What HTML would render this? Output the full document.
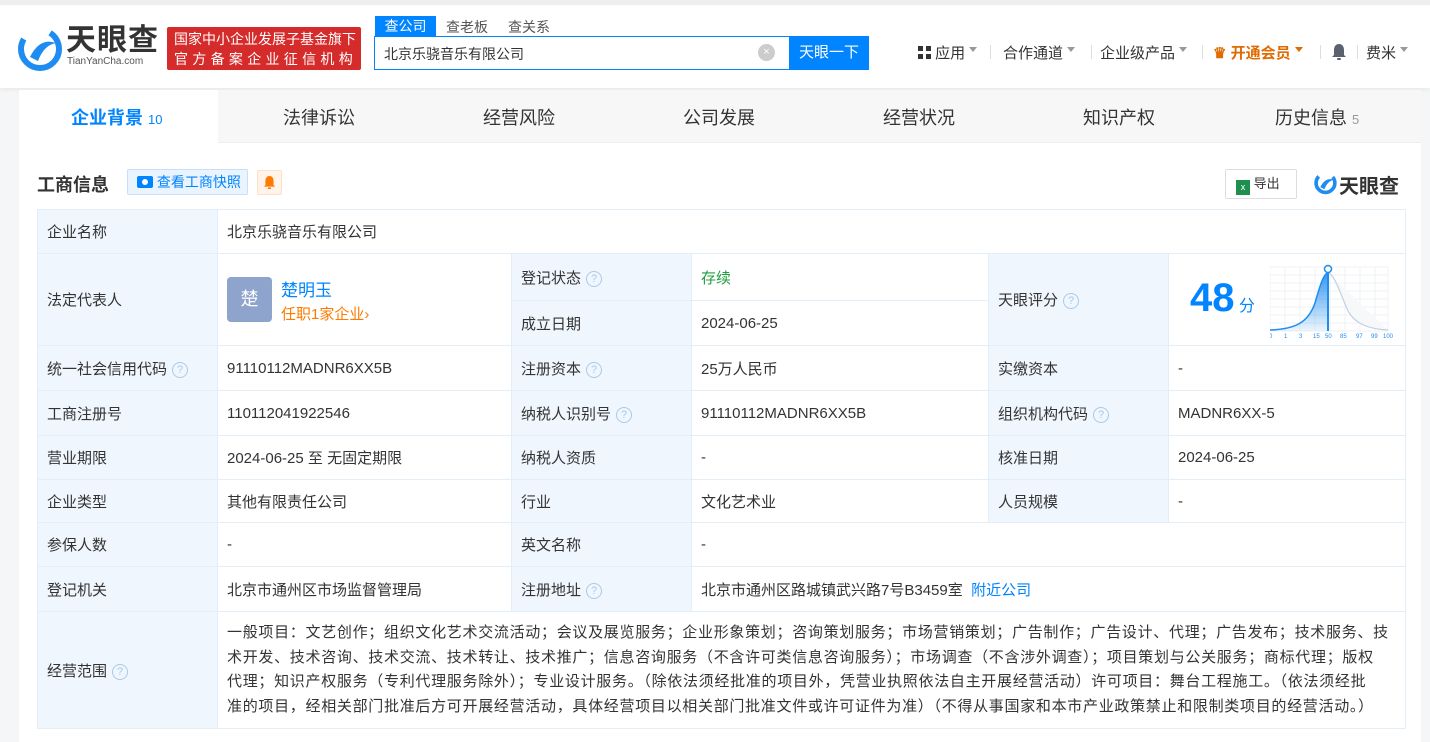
<!DOCTYPE html>
<html><head><meta charset="utf-8"><style>
*{margin:0;padding:0;box-sizing:border-box}
body{width:1430px;height:742px;overflow:hidden;background:#f5f6f7;font-family:"Liberation Sans","Noto Sans CJK SC",sans-serif;color:#333;font-size:15px;position:relative}
.a{position:absolute}
.hdr{left:0;top:0;width:1430px;height:88px;background:#fff;border-top:5px solid #eee;box-shadow:0 2px 4px rgba(0,0,0,.05)}
.nav{top:42px;font-size:15px;color:#333;white-space:nowrap}
.tri{display:inline-block;border:4px solid transparent;border-top:5px solid #999;vertical-align:2px;margin-left:4px}
.sep{top:45px;width:1px;height:14px;background:#ddd}
.card{left:19px;top:90px;width:1402px;height:652px;background:#fff}
.tabs{left:19px;top:90px;width:1402px;height:53px;background:#f7f7f7;border-bottom:1px solid #eee}
.tab{top:104px;font-size:18px;color:#333}
table{position:absolute;left:37px;top:209px;border-collapse:collapse;table-layout:fixed;width:1368px}
td{border:1px solid #e4eef6;padding:0 9px;font-size:15px;color:#333;vertical-align:middle}
td.l{background:#eff6fd}
.q{display:inline-block;width:16px;height:16px;border:1px solid #a9c9ea;border-radius:50%;color:#a9c9ea;font-size:11px;line-height:14px;text-align:center;margin-left:5px;vertical-align:1px}
.blue{color:#0084ff}
</style></head><body>
<div class="a hdr"></div>
<svg class="a" style="left:18px;top:27px" width="46" height="44" viewBox="0 0 46 44">
<circle cx="22" cy="22" r="19" fill="none" stroke="#1e8cf0" stroke-width="6" stroke-dasharray="70 30"/>
<path d="M12 30 Q22 10 38 16 Q26 18 20 34Z" fill="#1e8cf0"/></svg>
<div class="a" style="left:66px;top:26px;font-size:30px;line-height:30px;font-weight:bold;color:#333;letter-spacing:1px">天眼查</div>
<div class="a" style="left:67px;top:56px;font-size:10px;line-height:11px;color:#555">TianYanCha.com</div>
<div class="a" style="left:167px;top:27px;width:194px;height:43px;background:#d62b2b;border-radius:2px;color:#fff;font-size:14px;line-height:20px;padding:2px 0 0 7px;white-space:nowrap">国家中小企业发展子基金旗下<br><span style="letter-spacing:4.3px">官方备案企业征信机构</span></div>
<div class="a" style="left:375px;top:16px;width:61px;height:21px;background:#0084ff;color:#fff;font-size:14px;text-align:center;line-height:20px">查公司</div>
<div class="a" style="left:446px;top:17px;font-size:14px;color:#555">查老板</div>
<div class="a" style="left:508px;top:17px;font-size:14px;color:#555">查关系</div>
<div class="a" style="left:374px;top:36px;width:495px;height:34px;border:1px solid #0084ff;background:#fff"></div>
<div class="a" style="left:384px;top:44px;font-size:14px;color:#333">北京乐骁音乐有限公司</div>
<div class="a" style="left:758px;top:44px;width:17px;height:17px;border-radius:50%;background:#ccc;color:#fff;font-size:11px;text-align:center;line-height:17px">×</div>
<div class="a" style="left:789px;top:36px;width:80px;height:34px;background:#0084ff;color:#fff;font-size:15px;text-align:center;line-height:34px">天眼一下</div>
<div class="a nav" style="left:918px"><span style="display:inline-block;width:13px;height:13px;background:linear-gradient(#333,#333) 0 0/5px 5px no-repeat,linear-gradient(#333,#333) 8px 0/5px 5px no-repeat,linear-gradient(#333,#333) 0 8px/5px 5px no-repeat,linear-gradient(#333,#333) 8px 8px/5px 5px no-repeat;vertical-align:-1px"></span> 应用<span class="tri"></span></div>
<div class="a sep" style="left:990px"></div>
<div class="a nav" style="left:1003px">合作通道<span class="tri"></span></div>
<div class="a sep" style="left:1091px"></div>
<div class="a nav" style="left:1100px">企业级产品<span class="tri"></span></div>
<div class="a sep" style="left:1202px"></div>
<div class="a nav" style="left:1213px;color:#e06b00;font-weight:bold">♛ 开通会员<span class="tri" style="border-top-color:#e06b00"></span></div>
<div class="a sep" style="left:1320px"></div>
<svg class="a" style="left:1331px;top:43px" width="16" height="18" viewBox="0 0 16 18"><path d="M8 1C4.5 1 3 4 3 7V12L1 14H15L13 12V7C13 4 11.5 1 8 1Z" fill="#5a6270"/><rect x="6" y="15" width="4" height="2" rx="1" fill="#5a6270"/></svg>
<div class="a sep" style="left:1357px"></div>
<div class="a nav" style="left:1366px">费米<span class="tri"></span></div>

<div class="a card"></div>
<div class="a tabs"></div>
<div class="a" style="left:19px;top:90px;width:199px;height:54px;background:#fff"></div>
<div class="a tab" style="left:71px;color:#0084ff;font-weight:bold">企业背景 <span style="font-size:13px;font-weight:normal">10</span></div>
<div class="a tab" style="left:283px">法律诉讼</div>
<div class="a tab" style="left:483px">经营风险</div>
<div class="a tab" style="left:683px">公司发展</div>
<div class="a tab" style="left:883px">经营状况</div>
<div class="a tab" style="left:1083px">知识产权</div>
<div class="a tab" style="left:1275px">历史信息 <span style="font-size:13px;color:#999">5</span></div>

<div class="a" style="left:37px;top:171px;font-size:18px;font-weight:bold;color:#333">工商信息</div>
<div class="a" style="left:127px;top:169px;width:121px;height:26px;background:#eaf4fe;border:1px solid #c6e0fb;border-radius:2px;color:#0084ff;font-size:14px;line-height:24px;padding-left:9px"><span style="display:inline-block;width:16px;height:12px;background:#0084ff;border-radius:2px;vertical-align:-1px;position:relative"><span style="position:absolute;left:5px;top:3px;width:6px;height:6px;border-radius:50%;background:#fff"></span></span> 查看工商快照</div>
<div class="a" style="left:257px;top:170px;width:25px;height:25px;background:#fff3ea;border:1px solid #fde0c8;border-radius:2px"><svg style="position:absolute;left:5px;top:4px" width="13" height="15" viewBox="0 0 16 18"><path d="M8 1C4.5 1 3 4 3 7V12L1 14H15L13 12V7C13 4 11.5 1 8 1Z" fill="#ff7a00"/><rect x="6" y="15" width="4" height="2" rx="1" fill="#ff7a00"/></svg></div>
<div class="a" style="left:1225px;top:169px;width:72px;height:30px;border:1px solid #ddd;border-radius:2px;font-size:13px;line-height:28px;padding-left:10px;color:#333"><span style="display:inline-block;width:14px;height:15px;background:#1e8f4e;color:#fff;font-size:9px;line-height:15px;text-align:center;vertical-align:-2px">x</span> 导出</div>
<svg class="a" style="left:1314px;top:171px" width="24" height="24" viewBox="0 0 46 44"><circle cx="22" cy="22" r="18" fill="none" stroke="#1e8cf0" stroke-width="7" stroke-dasharray="70 30"/><path d="M12 30 Q22 10 38 16 Q26 18 20 34Z" fill="#1e8cf0"/></svg>
<div class="a" style="left:1339px;top:170px;font-size:20px;font-weight:bold;color:#333">天眼查</div>

<table>
<colgroup><col style="width:180px"><col style="width:294px"><col style="width:180px"><col style="width:297px"><col style="width:180px"><col style="width:237px"></colgroup>
<tr style="height:44px"><td class="l">企业名称</td><td colspan="5">北京乐骁音乐有限公司</td></tr>
<tr style="height:47px"><td class="l" rowspan="2">法定代表人</td><td rowspan="2" style="position:relative"><div style="position:absolute;left:9px;top:23px;width:45px;height:45px;background:#8ea4cc;border-radius:4px;color:#fff;font-size:18px;text-align:center;line-height:45px">楚</div><div style="position:absolute;left:63px;top:22px;font-size:17px;color:#0084ff">楚明玉</div><div style="position:absolute;left:63px;top:49px;font-size:15px;color:#ff7a00">任职1家企业›</div></td><td class="l">登记状态<span class="q">?</span></td><td style="color:#1f9d3d">存续</td><td class="l" rowspan="2">天眼评分<span class="q">?</span></td><td rowspan="2" style="position:relative"><div style="position:absolute;left:21px;top:22px;font-size:40px;font-weight:bold;color:#0084ff">48<span style="font-size:16px;font-weight:normal"> 分</span></div>
<svg style="position:absolute;left:101px;top:9px" width="124" height="76" viewBox="0 0 124 76"><g stroke="#eef2f6" stroke-width="1"><path d="M0 4H118M0 12H118M0 20H118M0 28H118M0 36H118M0 44H118M0 52H118M0 60H118M0 68H118M0 4V68M15 4V68M30 4V68M45 4V68M60 4V68M75 4V68M90 4V68M105 4V68M118 4V68"/></g>
<defs><linearGradient id="g" x1="0" y1="0" x2="0" y2="1"><stop offset="0" stop-color="#1e8cf0" stop-opacity=".9"/><stop offset="1" stop-color="#1e8cf0" stop-opacity=".08"/></linearGradient></defs>
<path d="M0 67 C25 66 38 60 45 40 C50 22 54 10 58 10 L58 68 L0 68Z" fill="url(#g)"/>
<path d="M58 10 C64 10 70 30 78 48 C86 62 100 66 118 67" fill="#f7f8fa" stroke="#bfd0e2" stroke-width="1.2"/>
<path d="M0 67 C25 66 38 60 45 40 C50 22 54 10 58 10" fill="none" stroke="#1e8cf0" stroke-width="1.5"/>
<path d="M58 8V68" stroke="#1e8cf0" stroke-width="2"/><circle cx="58" cy="6" r="3.5" fill="#fff" stroke="#1e8cf0" stroke-width="1.5"/>
<text y="75" font-size="6" fill="#1e8cf0" font-family="Liberation Sans">
<tspan x="-1">0</tspan><tspan x="14">1</tspan><tspan x="29">3</tspan><tspan x="43">15</tspan><tspan x="55">50</tspan><tspan x="70">85</tspan><tspan x="86">97</tspan><tspan x="101">99</tspan><tspan x="113">100</tspan></text></svg></td></tr>
<tr style="height:45px"><td class="l">成立日期</td><td>2024-06-25</td></tr>
<tr style="height:45px"><td class="l">统一社会信用代码<span class="q">?</span></td><td>91110112MADNR6XX5B</td><td class="l">注册资本<span class="q">?</span></td><td>25万人民币</td><td class="l">实缴资本</td><td>-</td></tr>
<tr style="height:45px"><td class="l">工商注册号</td><td>110112041922546</td><td class="l">纳税人识别号<span class="q">?</span></td><td>91110112MADNR6XX5B</td><td class="l">组织机构代码<span class="q">?</span></td><td>MADNR6XX-5</td></tr>
<tr style="height:44px"><td class="l">营业期限</td><td>2024-06-25 至 无固定期限</td><td class="l">纳税人资质</td><td>-</td><td class="l">核准日期</td><td>2024-06-25</td></tr>
<tr style="height:43px"><td class="l">企业类型</td><td>其他有限责任公司</td><td class="l">行业</td><td>文化艺术业</td><td class="l">人员规模</td><td>-</td></tr>
<tr style="height:44px"><td class="l">参保人数</td><td>-</td><td class="l">英文名称</td><td colspan="3">-</td></tr>
<tr style="height:45px"><td class="l">登记机关</td><td>北京市通州区市场监督管理局</td><td class="l">注册地址<span class="q">?</span></td><td colspan="3">北京市通州区路城镇武兴路7号B3459室 &nbsp;<span class="blue">附近公司</span></td></tr>
<tr style="height:117px"><td class="l">经营范围<span class="q">?</span></td><td colspan="5" style="line-height:24.5px;white-space:nowrap;letter-spacing:0.7px">一般项目：文艺创作；组织文化艺术交流活动；会议及展览服务；企业形象策划；咨询策划服务；市场营销策划；广告制作；广告设计、代理；广告发布；技术服务、技<br>术开发、技术咨询、技术交流、技术转让、技术推广；信息咨询服务（不含许可类信息咨询服务）；市场调查（不含涉外调查）；项目策划与公关服务；商标代理；版权<br>代理；知识产权服务（专利代理服务除外）；专业设计服务。（除依法须经批准的项目外，凭营业执照依法自主开展经营活动）许可项目：舞台工程施工。（依法须经批<br>准的项目，经相关部门批准后方可开展经营活动，具体经营项目以相关部门批准文件或许可证件为准）（不得从事国家和本市产业政策禁止和限制类项目的经营活动。）</td></tr>
</table>
</body></html>
